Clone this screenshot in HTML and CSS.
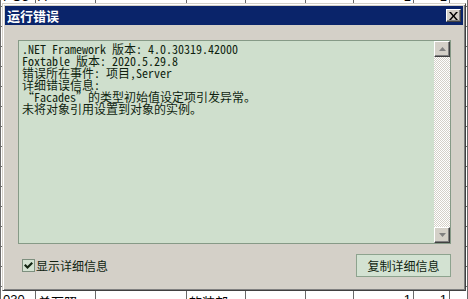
FILE: index.html
```html
<!DOCTYPE html>
<html lang="zh-CN">

<head>
    <meta charset="UTF-8">
    <title>运行错误</title>
    <link rel="stylesheet" href="styles.css">
</head>

<body>
    <table class="sheet">
        <tr><td>PO5</td><td>A</td><td></td><td></td><td></td><td></td><td class="num">1</td><td class="num">1</td><td></td></tr>
        <tr><td></td><td></td><td></td><td></td><td></td><td></td><td></td><td></td><td></td></tr>
        <tr><td></td><td></td><td></td><td></td><td></td><td></td><td></td><td></td><td></td></tr>
        <tr><td></td><td></td><td></td><td></td><td></td><td></td><td></td><td></td><td></td></tr>
        <tr><td></td><td></td><td></td><td></td><td></td><td></td><td></td><td></td><td></td></tr>
        <tr><td></td><td></td><td></td><td></td><td></td><td></td><td></td><td></td><td></td></tr>
        <tr><td></td><td></td><td></td><td></td><td></td><td></td><td></td><td></td><td></td></tr>
        <tr><td></td><td></td><td></td><td></td><td></td><td></td><td></td><td></td><td></td></tr>
        <tr><td></td><td></td><td></td><td></td><td></td><td></td><td></td><td></td><td></td></tr>
        <tr><td></td><td></td><td></td><td></td><td></td><td></td><td></td><td></td><td></td></tr>
        <tr><td></td><td></td><td></td><td></td><td></td><td></td><td></td><td></td><td></td></tr>
        <tr><td></td><td></td><td></td><td></td><td></td><td></td><td></td><td></td><td></td></tr>
        <tr><td></td><td></td><td></td><td></td><td></td><td></td><td></td><td></td><td></td></tr>
        <tr><td></td><td></td><td></td><td></td><td></td><td></td><td></td><td></td><td></td></tr>
        <tr><td></td><td></td><td></td><td></td><td></td><td></td><td></td><td></td><td></td></tr>
        <tr class="last"><td>030</td><td>单万照</td><td></td><td>软装部</td><td></td><td></td><td class="num">1</td><td class="num">1</td><td></td></tr>
    </table>

    <div class="dialog">
        <div class="titlebar">
            <span class="title">运行错误</span>
            <div class="close">
                <svg width="9" height="8" viewBox="0 0 9 8">
                    <path d="M0 0h2l2.5 3 2.5-3h2l-3.5 4 3.5 4h-2l-2.5-3-2.5 3h-2l3.5-4z" fill="#000"/>
                </svg>
            </div>
        </div>
        <div class="content">
            <div class="detail">
                <div class="text">
                    <div>.NET Framework 版本: 4.0.30319.42000</div>
                    <div>Foxtable 版本: 2020.5.29.8</div>
                    <div>错误所在事件: 项目,Server</div>
                    <div>详细错误信息:</div>
                    <div>“Facades”的类型初始值设定项引发异常。</div>
                    <div>未将对象引用设置到对象的实例。</div>
                </div>
                <div class="scrollbar">
                    <div class="sb-btn">
                        <svg width="7" height="4" viewBox="0 0 7 4"><path d="M3.5 0L7 4H0z" fill="#808080"/></svg>
                    </div>
                    <div class="track"></div>
                    <div class="sb-btn">
                        <svg width="7" height="4" viewBox="0 0 7 4"><path d="M0 0h7L3.5 4z" fill="#808080"/></svg>
                    </div>
                </div>
            </div>
            <div class="footer">
                <label class="check">
                    <span class="box">
                        <svg width="9" height="8" viewBox="0 0 9 8"><path d="M0 3.5l1.5-1.5 2 2L7.5 0 9 1.5 3.5 7z" fill="#122412"/></svg>
                    </span>
                    显示详细信息
                </label>
                <div class="copy">复制详细信息</div>
            </div>
        </div>
    </div>
</body>

</html>
```

FILE: styles.css
```css
body {
    margin: 0;
    background: #fff;
    overflow: hidden;
    font-family: "Liberation Sans", "Noto Sans CJK SC", sans-serif;
}

.sheet {
    border-collapse: collapse;
    table-layout: fixed;
    width: 468px;
    margin-top: -14px;
}

.sheet td {
    height: 19px;
    padding: 0 2px;
    border: 1px solid #6a6a6a;
    font-size: 13px;
    color: #000;
    white-space: nowrap;
    overflow: hidden;
}

.sheet .last td {
    padding-top: 5px;
    vertical-align: top;
}

.sheet td:nth-child(1) { width: 30px; }
.sheet td:nth-child(2) { width: 55px; }
.sheet td:nth-child(3) { width: 86px; }
.sheet td:nth-child(4) { width: 54px; }
.sheet td:nth-child(5) { width: 55px; }
.sheet td:nth-child(6) { width: 43px; }
.sheet td:nth-child(7) { width: 55px; }
.sheet td:nth-child(8) { width: 31px; }

.sheet .num {
    text-align: right;
}

/* 弹出窗口 */
.dialog {
    position: absolute;
    left: 2px;
    top: 3px;
    width: 464px;
    height: 288px;
    box-sizing: border-box;
    padding: 2px;
    background: #d4d0c8;
    border: 1px solid;
    border-color: #d4d0c8 #404040 #404040 #d4d0c8;
    box-shadow: inset 1px 1px 0 #fff, inset -1px -1px 0 #808080;
    display: flex;
    flex-direction: column;
}

.titlebar {
    height: 19px;
    background: #0a246a;
    display: flex;
    align-items: center;
    justify-content: space-between;
    padding: 0 2px;
}

.title {
    color: #fff;
    font-weight: bold;
    font-size: 13px;
    line-height: 19px;
    font-family: "Noto Sans CJK SC", sans-serif;
}

.close {
    width: 15px;
    height: 13px;
    box-sizing: border-box;
    background: #d4d0c8;
    border: 1px solid;
    border-color: #fff #404040 #404040 #fff;
    box-shadow: inset -1px -1px 0 #808080;
    display: flex;
    align-items: center;
    justify-content: center;
}

.content {
    flex: 1;
    padding: 15px 12px 0 13px;
    display: flex;
    flex-direction: column;
}

.detail {
    height: 204px;
    box-sizing: border-box;
    border: 1px solid #869a87;
    background: #cfdfcd;
    display: flex;
}

.text {
    flex: 1;
    padding: 2px 3px;
    font-family: "Noto Sans Mono CJK SC", "Liberation Mono", "Noto Sans CJK SC", monospace;
    font-size: 12px;
    line-height: 12px;
    color: #0f1f10;
}

.text div {
    white-space: pre;
}

.scrollbar {
    width: 16px;
    display: flex;
    flex-direction: column;
}

.sb-btn {
    height: 16px;
    box-sizing: border-box;
    background: #d4d0c8;
    border: 1px solid;
    border-color: #fff #404040 #404040 #fff;
    box-shadow: inset -1px -1px 0 #808080;
    display: flex;
    align-items: center;
    justify-content: center;
}

.track {
    flex: 1;
    background-color: #fff;
    background-image: repeating-conic-gradient(#d4d0c8 0 25%, #fff 0 50%);
    background-size: 2px 2px;
}

.footer {
    margin-top: 10px;
    display: flex;
    align-items: center;
    justify-content: space-between;
    padding-left: 4px;
}

.check {
    display: flex;
    align-items: center;
    gap: 1px;
    font-family: "Noto Sans CJK SC", sans-serif;
    font-size: 12px;
    color: #0f1f10;
}

.box {
    width: 13px;
    height: 13px;
    box-sizing: border-box;
    border: 1px solid #7d8f7e;
    background: #d3e2d2;
    display: flex;
    align-items: center;
    justify-content: center;
}

.copy {
    width: 95px;
    height: 23px;
    box-sizing: border-box;
    border: 1px solid #8da38e;
    background: #d3e2d2;
    font-family: "Noto Sans CJK SC", sans-serif;
    font-size: 12px;
    line-height: 21px;
    text-align: center;
    color: #0f1f10;
}
```
